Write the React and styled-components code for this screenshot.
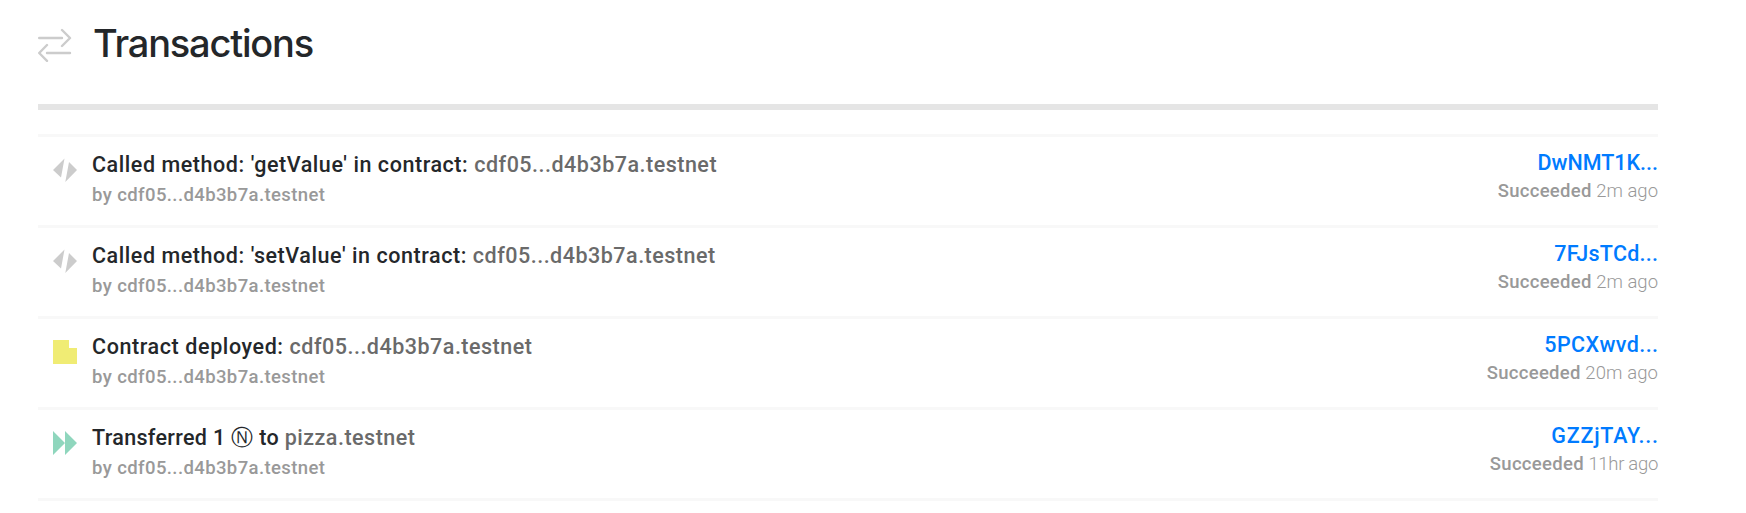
import React from "react";
import styled, { createGlobalStyle } from "styled-components";

const Global = createGlobalStyle`
  * { box-sizing: border-box; }
  body { margin: 0; background: #fff; color: #24272a; font-family: Roboto, "Liberation Sans", sans-serif; }
`;
const Page = styled.main`padding: 22px 88px 0 38px; height: 513px;`;
const Header = styled.header`
  display: flex; align-items: flex-start; gap: 21px;
  height: 88px; border-bottom: 6px solid #e5e5e5;
  svg { margin-top: 6px; }
`;
const Title = styled.h1`
  margin: -1px 0 0; font: 500 38px/44px Inter, sans-serif; letter-spacing: -1.2px;
`;
const List = styled.ul`
  list-style: none; margin: 24px 0 0; padding: 0; border-bottom: 3px solid #f8f8f8;
`;
const Row = styled.li`
  display: flex; height: 91px; border-top: 3px solid #f8f8f8; white-space: nowrap;
`;
const IconCell = styled.div`width: 54px; padding: 21px 0 0 15px; svg { display: block; }`;
const Details = styled.div`flex: 1; padding-top: 14px;`;
const Action = styled.div`
  font-size: 21.5px; font-weight: 500; line-height: 28px;
  letter-spacing: ${(p) => p.$tracking}px;
`;
const Account = styled.span`color: #6a6a6a; letter-spacing: 0.5px;`;
const Signer = styled.div`
  margin-top: 3px; color: #999; font-size: 18.5px; font-weight: 500; line-height: 26px;
  letter-spacing: 0.4px;
`;
const Status = styled.div`padding-top: 12px; text-align: right;`;
const Hash = styled.a`
  display: block; color: #007bff; font-size: 21.5px; font-weight: 500; line-height: 28px;
  letter-spacing: ${(p) => p.$tracking}px;
  margin-right: ${(p) => -p.$tracking}px;
`;
const Outcome = styled.div`
  margin-top: 1px; color: #999; font-size: 18.5px; font-weight: 300; line-height: 26px;
  b { font-weight: 500; letter-spacing: 0.3px; }
`;
const Age = styled.span`letter-spacing: ${(p) => p.$tracking}px;`;

const icons = {
  call: <svg width="24" height="24"><path d="M0 12 11.5 .5 8 19.500ZM16 4 24 12 12.300 24Z" fill="#ccc" /></svg>,
  deploy: <svg width="24" height="24"><path d="M0 0H16V8H24V24H0Z" fill="#f0ec74" /></svg>,
  transfer: <svg width="24" height="24"><path d="M0 0 12 12V0L24 12 12 24V12L0 24Z" fill="#8fd6bd" /></svg>,
};
const signer = "cdf05...d4b3b7a.testnet";
const rows = [
  { icon: "call", text: "Called method: 'getValue' in contract: ", tracking: 0.56, account: signer, hash: "DwNMT1K...", hashTracking: 0, age: "2m ago", ageTracking: 0 },
  { icon: "call", text: "Called method: 'setValue' in contract: ", tracking: 0.56, account: signer, hash: "7FJsTCd...", hashTracking: 0.25, age: "2m ago", ageTracking: 0 },
  { icon: "deploy", text: "Contract deployed: ", tracking: 0.6, account: signer, hash: "5PCXwvd...", hashTracking: 0.4, age: "20m ago", ageTracking: 0.1 },
  { icon: "transfer", text: "Transferred 1 Ⓝ to ", tracking: 0.33, account: "pizza.testnet", hash: "GZZjTAY...", hashTracking: 0.75, age: "11hr ago", ageTracking: -0.3 },
];

export default function App() {
  return (
    <Page>
      <Global />
      <Header>
        <svg width="34" height="34" fill="none" stroke="#ccc" strokeWidth="2.4" strokeLinecap="round" strokeLinejoin="round">
          <path d="M1.200 10H24M24 2 32 10 24 18M32 25H9M9 17 1.200 25 9 32.800" />
        </svg>
        <Title>Transactions</Title>
      </Header>
      <List>
        {rows.map((r) => (
          <Row key={r.hash}>
            <IconCell>{icons[r.icon]}</IconCell>
            <Details>
              <Action $tracking={r.tracking}>{r.text}<Account>{r.account}</Account></Action>
              <Signer>by {signer}</Signer>
            </Details>
            <Status>
              <Hash $tracking={r.hashTracking}>{r.hash}</Hash>
              <Outcome><b>Succeeded</b> <Age $tracking={r.ageTracking}>{r.age}</Age></Outcome>
            </Status>
          </Row>
        ))}
      </List>
    </Page>
  );
}
